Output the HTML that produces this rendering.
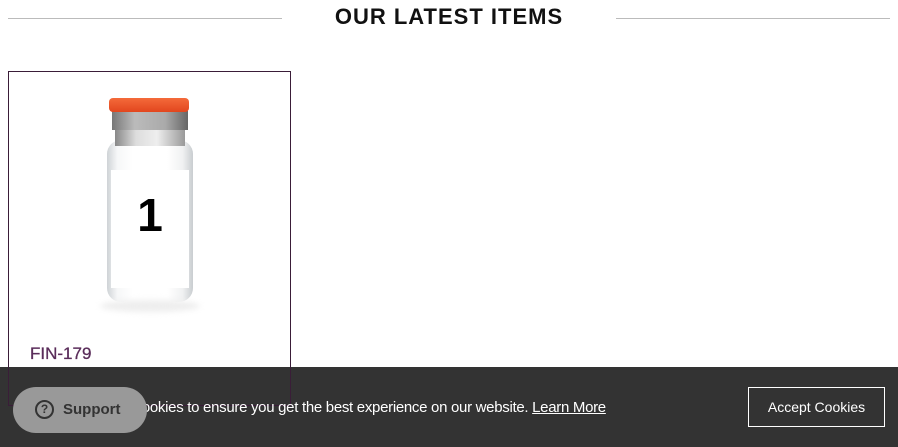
<!DOCTYPE html>
<html><head><style>
body{margin:0;width:898px;height:447px;overflow:hidden;background:#fff;font-family:"Liberation Sans",sans-serif;position:relative}
.abs{position:absolute}
</style></head><body>
<div class="abs" style="left:8px;top:18px;width:274px;height:1px;background:#bbb"></div>
<div class="abs" style="left:616px;top:18px;width:274px;height:1px;background:#bbb"></div>
<div class="abs" style="left:282px;width:334px;top:4px;text-align:center;font-size:22px;font-weight:bold;letter-spacing:1px;color:#111">OUR LATEST ITEMS</div>
<!-- vial -->
<div class="abs" style="left:107px;top:140px;width:86px;height:162px;border-radius:14px;background:linear-gradient(90deg,#cfd3d6,#f6f7f8 12%,#fff 30%,#fff 70%,#f0f1f2 88%,#c9cdd0)"></div>
<div class="abs" style="left:111px;top:170px;width:78px;height:118px;background:#fff"></div>
<div class="abs" style="left:115px;top:128px;width:70px;height:18px;background:linear-gradient(90deg,#888,#ddd 30%,#eee 60%,#999)"></div>
<div class="abs" style="left:112px;top:111px;width:76px;height:19px;background:linear-gradient(90deg,#777,#bbb 30%,#aaa 70%,#666)"></div>
<div class="abs" style="left:109px;top:98px;width:80px;height:14px;border-radius:4px;background:linear-gradient(#f46a3a,#e2461e)"></div>
<div class="abs" style="left:100px;top:300px;width:100px;height:12px;border-radius:50%;background:#eee;filter:blur(3px)"></div>
<div class="abs" style="left:110px;top:188px;width:80px;text-align:center;font-size:46px;font-weight:bold;color:#000">1</div>
<div class="abs" style="left:30px;top:344px;font-size:17px;color:#5a2d5a;-webkit-text-stroke:0.3px #5a2d5a">FIN-179</div>
<!-- cookie bar -->
<div class="abs" style="left:0;top:367px;width:898px;height:80px;background:#333"></div>
<div class="abs" style="left:8px;top:71px;width:281px;height:333px;border:1.5px solid #3a1d38"></div>
<div class="abs" style="left:82px;top:399px;font-size:15px;color:#fff;letter-spacing:-0.3px">We use cookies to ensure you get the best experience on our website. <span style="text-decoration:underline">Learn More</span></div>
<div class="abs" style="left:748px;top:387px;width:135px;height:38px;border:1px solid #fff;color:#fff;font-size:14px;line-height:38px;text-align:center">Accept Cookies</div>
<div class="abs" style="left:13px;top:387px;width:134px;height:46px;border-radius:23px;background:#999;color:#333;font-weight:bold;font-size:15px;line-height:46px">
<span style="position:absolute;left:22px;top:13px;width:19px;height:19px;border:2px solid #333;border-radius:50%;box-sizing:border-box;font-size:12px;line-height:15px;text-align:center">?</span>
<span style="position:absolute;left:50px">Support</span></div>
</body></html>
